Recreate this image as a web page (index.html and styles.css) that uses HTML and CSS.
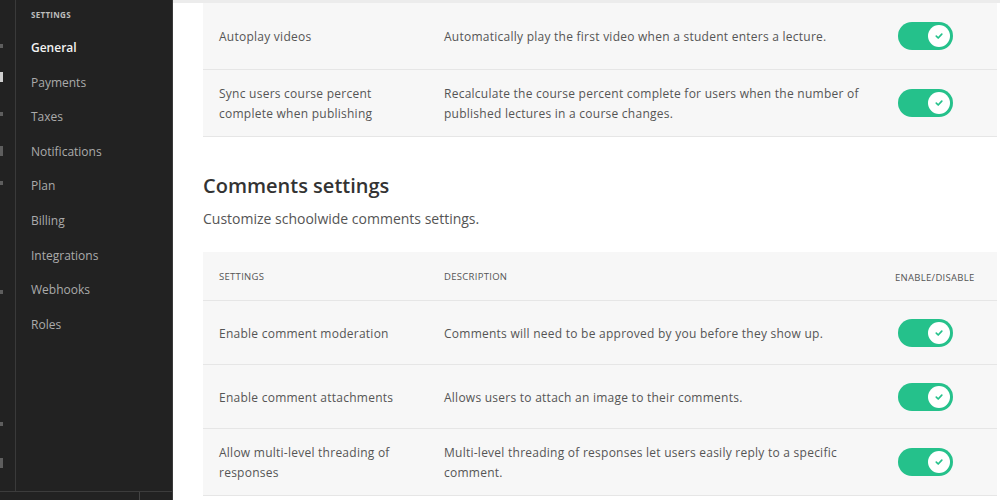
FILE: index.html
```html
<!DOCTYPE html>
<html>
<head>
<meta charset="utf-8">
<link rel="stylesheet" href="styles.css">
</head>
<body>
<div class="app">
  <aside class="sidebar">
    <div class="side-main">
      <div class="icon-strip">
        <span class="ic" style="top:44px"></span>
        <span class="ic bright tall" style="top:72px"></span>
        <span class="ic" style="top:112px"></span>
        <span class="ic tall" style="top:146px"></span>
        <span class="ic" style="top:181px"></span>
        <span class="ic" style="top:290px"></span>
        <span class="ic" style="top:422px"></span>
        <span class="ic tall" style="top:458px"></span>
      </div>
      <nav class="nav">
        <div class="nav-title">SETTINGS</div>
        <a class="nav-item active">General</a>
        <a class="nav-item">Payments</a>
        <a class="nav-item">Taxes</a>
        <a class="nav-item">Notifications</a>
        <a class="nav-item">Plan</a>
        <a class="nav-item">Billing</a>
        <a class="nav-item">Integrations</a>
        <a class="nav-item">Webhooks</a>
        <a class="nav-item">Roles</a>
      </nav>
    </div>
    <div class="side-foot">
      <div class="foot-a"></div>
      <div class="foot-b"></div>
    </div>
  </aside>

  <main class="main">
    <div class="table">
      <div class="row row-first">
        <div class="cell name">Autoplay videos</div>
        <div class="cell desc">Automatically play the first video when a student enters a lecture.</div>
        <div class="cell act"><span class="toggle"><span class="knob"><svg viewBox="0 0 10 10" width="10" height="10"><path d="M2.3 5.2 L4.2 7 L7.8 3.2" fill="none" stroke="#25c18b" stroke-width="1.7" stroke-linecap="round" stroke-linejoin="round"/></svg></span></span></div>
      </div>
      <div class="row">
        <div class="cell name">Sync users course percent complete when publishing</div>
        <div class="cell desc">Recalculate the course percent complete for users when the number of published lectures in a course changes.</div>
        <div class="cell act"><span class="toggle"><span class="knob"><svg viewBox="0 0 10 10" width="10" height="10"><path d="M2.3 5.2 L4.2 7 L7.8 3.2" fill="none" stroke="#25c18b" stroke-width="1.7" stroke-linecap="round" stroke-linejoin="round"/></svg></span></span></div>
      </div>
    </div>

    <h2 class="section-title">Comments settings</h2>
    <p class="section-sub">Customize schoolwide comments settings.</p>

    <div class="table">
      <div class="row head">
        <div class="cell name">SETTINGS</div>
        <div class="cell desc">DESCRIPTION</div>
        <div class="cell act">ENABLE/DISABLE</div>
      </div>
      <div class="row">
        <div class="cell name">Enable comment moderation</div>
        <div class="cell desc">Comments will need to be approved by you before they show up.</div>
        <div class="cell act"><span class="toggle"><span class="knob"><svg viewBox="0 0 10 10" width="10" height="10"><path d="M2.3 5.2 L4.2 7 L7.8 3.2" fill="none" stroke="#25c18b" stroke-width="1.7" stroke-linecap="round" stroke-linejoin="round"/></svg></span></span></div>
      </div>
      <div class="row">
        <div class="cell name">Enable comment attachments</div>
        <div class="cell desc">Allows users to attach an image to their comments.</div>
        <div class="cell act"><span class="toggle"><span class="knob"><svg viewBox="0 0 10 10" width="10" height="10"><path d="M2.3 5.2 L4.2 7 L7.8 3.2" fill="none" stroke="#25c18b" stroke-width="1.7" stroke-linecap="round" stroke-linejoin="round"/></svg></span></span></div>
      </div>
      <div class="row">
        <div class="cell name">Allow multi-level threading of responses</div>
        <div class="cell desc">Multi-level threading of responses let users easily reply to a specific comment.</div>
        <div class="cell act"><span class="toggle"><span class="knob"><svg viewBox="0 0 10 10" width="10" height="10"><path d="M2.3 5.2 L4.2 7 L7.8 3.2" fill="none" stroke="#25c18b" stroke-width="1.7" stroke-linecap="round" stroke-linejoin="round"/></svg></span></span></div>
      </div>
    </div>
  </main>
</div>
</body>
</html>
```

FILE: styles.css
```css
* { box-sizing: border-box; }
html, body { margin: 0; padding: 0; }
body {
  width: 1000px;
  height: 500px;
  overflow: hidden;
  background: #fff;
  font-family: "Open Sans", "Noto Sans", sans-serif;
  color: #555;
}
.app {
  display: flex;
  height: 500px;
}
.sidebar {
  width: 173px;
  flex: 0 0 173px;
  background: #222;
  display: flex;
  flex-direction: column;
  border-right: 1px solid #3a3a3a;
}
.side-main {
  flex: 1;
  display: flex;
}
.icon-strip {
  width: 16px;
  flex: 0 0 16px;
  border-right: 1px solid #3a3a3a;
  position: relative;
  overflow: hidden;
}
.ic {
  position: absolute;
  left: 0;
  width: 3px;
  height: 4px;
  background: #5e5e5e;
}
.ic.tall { height: 10px; }
.ic.bright { background: #cfcfcf; }
.nav {
  flex: 1;
  padding: 10px 0 0 15px;
  display: flex;
  flex-direction: column;
}
.nav-title {
  font-size: 8px;
  font-weight: 700;
  color: #bdbdbd;
  letter-spacing: 0.3px;
  height: 20px;
  line-height: 10px;
}
.nav-item {
  font-size: 12px;
  color: #ababab;
  height: 34.6px;
  line-height: 36px;
}
.nav-item.active {
  color: #f2f2f2;
  font-weight: 600;
}
.side-foot {
  height: 9px;
  flex: 0 0 9px;
  border-top: 1px solid #3c3c3c;
  display: flex;
}
.foot-a { width: 140px; border-right: 1px solid #444; }
.foot-b { flex: 1; }

.main {
  flex: 1;
  border-top: 3px solid #ececec;
  padding: 0 3px 0 30px;
}
.table {
  background: #f7f7f7;
}
.row {
  display: grid;
  grid-template-columns: 225px 451px 1fr;
  align-items: center;
  min-height: 64px;
  border-top: 1px solid #e6e6e6;
  font-size: 12px;
  letter-spacing: 0.25px;
  line-height: 20px;
  color: #555;
}
.row-first { border-top: 0; min-height: 66px; }
.table .row:last-child { border-bottom: 1px solid #e6e6e6; }
.cell { padding: 14px 16px 12px; }
.head {
  min-height: 48px;
  border-top: 0;
  font-size: 9.5px;
  letter-spacing: 0.3px;
  color: #555;
}
.act { padding: 0 16px 0 19px; display: flex; }
.head .act { padding: 3px 16px 0; display: block; }
.toggle {
  width: 55px;
  height: 28px;
  border-radius: 14px;
  background: #25c18b;
  display: flex;
  align-items: center;
  justify-content: flex-end;
  padding-right: 3px;
}
.knob {
  width: 22px;
  height: 22px;
  border-radius: 50%;
  background: #fff;
  display: flex;
  align-items: center;
  justify-content: center;
}
.section-title {
  margin: 36px 0 0 0;
  font-size: 20px;
  font-weight: 600;
  color: #333;
  line-height: 26px;
}
.section-sub {
  margin: 11px 0 0 0;
  font-size: 14px;
  color: #555;
  line-height: 18px;
  height: 42px;
}
```
